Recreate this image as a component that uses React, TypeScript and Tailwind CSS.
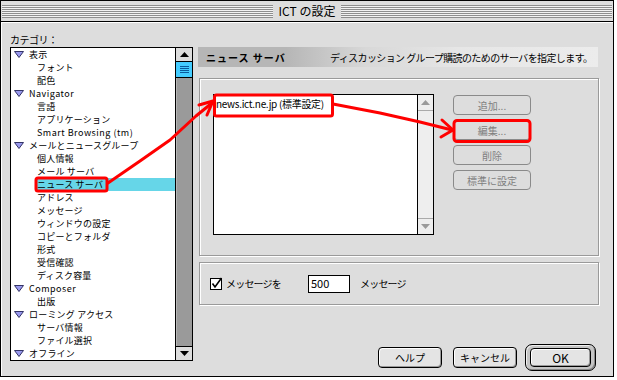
import React from "react";

type Item = { label: string; parent?: boolean; selected?: boolean; latin?: boolean };

const items: Item[] = [
  { label: "表示", parent: true },
  { label: "フォント" },
  { label: "配色" },
  { label: "Navigator", parent: true, latin: true },
  { label: "言語" },
  { label: "アプリケーション" },
  { label: "Smart Browsing (tm)", latin: true },
  { label: "メールとニュースグループ", parent: true },
  { label: "個人情報" },
  { label: "メール サーバ" },
  { label: "ニュース サーバ", selected: true },
  { label: "アドレス" },
  { label: "メッセージ" },
  { label: "ウィンドウの設定" },
  { label: "コピーとフォルダ" },
  { label: "形式" },
  { label: "受信確認" },
  { label: "ディスク容量" },
  { label: "Composer", parent: true, latin: true },
  { label: "出版" },
  { label: "ローミング アクセス", parent: true },
  { label: "サーバ情報" },
  { label: "ファイル選択" },
  { label: "オフライン", parent: true },
];

function Triangle() {
  return (
    <svg width="10" height="7" viewBox="0 0 10 7">
      <polygon points="0.5,0.5 9.5,0.5 5,6.5" fill="#9999ee" stroke="#333366" strokeWidth="1" />
    </svg>
  );
}

function Row({ item }: { item: Item }) {
  const txt = item.latin ? "tracking-[0.5px]" : "tracking-[0.2px]";
  if (item.parent) {
    return (
      <div className="h-[13px] flex items-center pl-[3px]">
        <Triangle />
        <span className={`ml-[5px] whitespace-nowrap ${txt}`}>{item.label}</span>
      </div>
    );
  }
  return (
    <div className="h-[13px] flex pl-[24px]">
      <div className={`flex-1 pl-[2px] whitespace-nowrap ${txt} ${item.selected ? "bg-[#66d6e8]" : ""}`}>
        {item.label}
      </div>
    </div>
  );
}

function Arrow({ up, color }: { up?: boolean; color: string }) {
  return (
    <svg width="9" height="5" viewBox="0 0 9 5">
      <polygon points={up ? "0,5 9,5 4.5,0" : "0,0 9,0 4.5,5"} fill={color} />
    </svg>
  );
}

function MacButton({ label, disabled }: { label: string; disabled?: boolean }) {
  return (
    <div
      className={
        disabled
          ? "w-[78px] h-[20px] rounded-[4px] border border-[#8a8a8a] bg-[#dddddd] text-[#7f7f7f] flex items-center justify-center"
          : "w-[64px] h-[21px] rounded-[4px] border border-black bg-[#e4e4e4] shadow-[inset_1px_1px_0_#ffffff,inset_-1px_-1px_0_#999999] flex items-center justify-center"
      }
    >
      {label}
    </div>
  );
}

export default function App() {
  return (
    <div className="relative w-[617px] h-[380px] bg-white text-black text-[10px] leading-[13px] font-['Noto_Sans_CJK_JP',sans-serif]">
      <div className="w-[614px] h-[377px] border border-black bg-[#dddddd] flex flex-col">
        {/* title bar */}
        <div className="h-[21px] border-b border-black flex items-center px-[1px]">
          <div className="flex-1 h-[13px] bg-[repeating-linear-gradient(to_bottom,#8e8e8e_0px,#8e8e8e_1px,#f2f2f2_1px,#f2f2f2_2px)]" />
          <div className="px-[6px] text-[12px] leading-[16px]">ICT の設定</div>
          <div className="flex-1 h-[13px] bg-[repeating-linear-gradient(to_bottom,#8e8e8e_0px,#8e8e8e_1px,#f2f2f2_1px,#f2f2f2_2px)]" />
        </div>

        <div className="flex-1 flex pl-[9px] shadow-[inset_1px_1px_0_#ffffff]">
          {/* category column */}
          <div className="w-[183px] pt-[11px]">
            <div className="h-[13px] tracking-[-0.5px]">カテゴリ：</div>
            <div className="mt-[1px] h-[314px] border border-black bg-white flex">
              <div className="flex-1 text-[9px] leading-[13px]">
                {items.map((it) => (
                  <Row key={it.label} item={it} />
                ))}
              </div>
              <div className="w-[17px] border-l border-black flex flex-col">
                <div className="h-[14px] border-b border-black bg-[#dddddd] flex items-center justify-center">
                  <Arrow up color="#000" />
                </div>
                <div className="h-[16px] border-b border-black bg-[#44ccff] flex flex-col items-center justify-center gap-[1px]">
                  <div className="w-[9px] h-[1px] bg-[#0a5a9c]" />
                  <div className="w-[9px] h-[1px] bg-[#0a5a9c]" />
                  <div className="w-[9px] h-[1px] bg-[#0a5a9c]" />
                  <div className="w-[9px] h-[1px] bg-[#0a5a9c]" />
                </div>
                <div className="flex-1 bg-[#9a9a9a] shadow-[inset_1px_0_0_#b5b5b5]" />
                <div className="h-[14px] border-t border-black bg-[#dddddd] flex items-center justify-center">
                  <Arrow color="#000" />
                </div>
              </div>
            </div>
          </div>

          {/* settings column */}
          <div className="w-[401px] ml-[5px] pt-[25px] pr-[3px] flex flex-col">
            <div className="w-[400px] h-[20px] flex items-center pl-[8px] bg-[linear-gradient(to_right,#b6b6b6_0%,#b6b6b6_22%,#d8d8d8_42%,#e6e6e6_65%,#ececec_100%)]">
              <div className="w-[124px] font-bold tracking-[1px]">ニュース サーバ</div>
              <div className="tracking-[-0.6px] whitespace-nowrap">ディスカッション グループ購読のためのサーバを指定します。</div>
            </div>

            <div className="ml-[1px] mt-[11px] w-[400px] h-[178px] border border-[#9a9a9a] shadow-[inset_1px_1px_0_#ffffff,1px_1px_0_#ffffff] flex pl-[13px] pt-[15px]">
              <div className="w-[221px] h-[141px] border border-black bg-white flex">
                <div className="flex-1 pl-[2px] pt-[2px] whitespace-nowrap tracking-[-0.3px]">news.ict.ne.jp (標準設定)</div>
                <div className="w-[16px] border-l border-black bg-[#eeeeee] flex flex-col">
                  <div className="h-[16px] border-b border-[#aaaaaa] flex items-center justify-center">
                    <Arrow up color="#9a9a9a" />
                  </div>
                  <div className="flex-1" />
                  <div className="h-[16px] border-t border-[#aaaaaa] flex items-center justify-center">
                    <Arrow color="#9a9a9a" />
                  </div>
                </div>
              </div>
              <div className="ml-[19px] mt-[1px] flex flex-col gap-[5px]">
                <MacButton label="追加..." disabled />
                <MacButton label="編集..." disabled />
                <MacButton label="削除" disabled />
                <MacButton label="標準に設定" disabled />
              </div>
            </div>

            <div className="ml-[1px] mt-[6px] w-[400px] h-[43px] border border-[#9a9a9a] shadow-[inset_1px_1px_0_#ffffff,1px_1px_0_#ffffff] flex items-center pl-[10px]">
              <div className="w-[98px] flex items-center">
                <svg width="13" height="13" viewBox="0 0 13 13">
                  <rect x="0.5" y="1.5" width="11" height="11" fill="#ffffff" stroke="#000" />
                  <path d="M2.5 6.5 L5 10 L11.5 1" fill="none" stroke="#000" strokeWidth="1.6" />
                </svg>
                <span className="ml-[3px] tracking-[-0.8px]">メッセージを</span>
              </div>
              <div className="w-[42px] h-[18px] border border-black bg-white pl-[2px] flex items-center text-[11px]">500</div>
              <span className="ml-[10px] tracking-[-0.8px]">メッセージ</span>
            </div>

            <div className="mt-[39px] flex items-center justify-end">
              <MacButton label="ヘルプ" />
              <div className="ml-[11px]">
                <MacButton label="キャンセル" />
              </div>
              <div className="ml-[8px] rounded-[7px] border border-black bg-[#c4c4c4] shadow-[inset_1px_1px_0_#eeeeee,inset_-1px_-1px_0_#888888] px-[4px] py-[3px]">
                <div className="w-[61px] h-[19px] rounded-[4px] border border-black bg-[#e4e4e4] shadow-[inset_1px_1px_0_#ffffff,inset_-1px_-1px_0_#999999] flex items-center justify-center text-[12px]">
                  OK
                </div>
              </div>
            </div>
          </div>
        </div>
      </div>

      {/* red annotations drawn over the dialog */}
      <svg className="absolute inset-0 pointer-events-none" width="617" height="380" viewBox="0 0 617 380">
        <g fill="none" stroke="#ff0000" strokeWidth="3" strokeLinejoin="round" strokeLinecap="round">
          <rect x="36" y="178" width="71" height="13" rx="2" />
          <rect x="214.5" y="95" width="118" height="21" rx="2" />
          <rect x="454" y="120.5" width="76" height="21" rx="3" />
          <polyline points="108,183 140,161 170,140 196,116 212,103" />
          <polyline points="199,105 213,101 207,115" />
          <polyline points="333,104 380,113 420,122 452,130" />
          <polyline points="442,120 453,130 441,137" />
        </g>
      </svg>
    </div>
  );
}
